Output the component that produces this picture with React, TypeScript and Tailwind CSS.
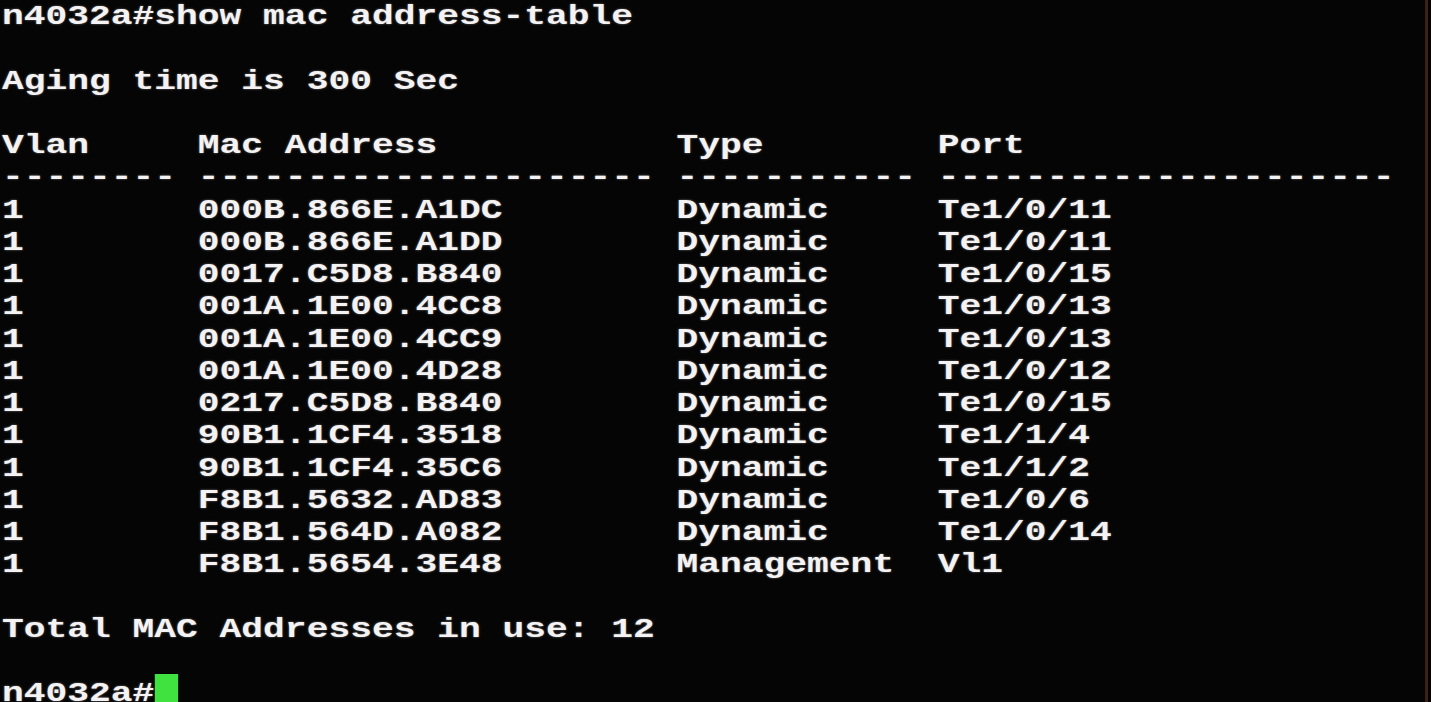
import React from "react";

const lines: string[] = [
  "n4032a#show mac address-table",
  "",
  "Aging time is 300 Sec",
  "",
  "Vlan     Mac Address           Type        Port",
  "-------- --------------------- ----------- ---------------------",
  "1        000B.866E.A1DC        Dynamic     Te1/0/11",
  "1        000B.866E.A1DD        Dynamic     Te1/0/11",
  "1        0017.C5D8.B840        Dynamic     Te1/0/15",
  "1        001A.1E00.4CC8        Dynamic     Te1/0/13",
  "1        001A.1E00.4CC9        Dynamic     Te1/0/13",
  "1        001A.1E00.4D28        Dynamic     Te1/0/12",
  "1        0217.C5D8.B840        Dynamic     Te1/0/15",
  "1        90B1.1CF4.3518        Dynamic     Te1/1/4",
  "1        90B1.1CF4.35C6        Dynamic     Te1/1/2",
  "1        F8B1.5632.AD83        Dynamic     Te1/0/6",
  "1        F8B1.564D.A082        Dynamic     Te1/0/14",
  "1        F8B1.5654.3E48        Management  Vl1",
  "",
  "Total MAC Addresses in use: 12",
  "",
];

export default function App() {
  return (
    <div className="w-full h-[702px] overflow-hidden bg-[#050505] flex">
      <div className="flex-1 min-w-0 overflow-hidden pl-[2px] pt-[1px]">
        <div
          className="origin-top-left scale-x-[1.295] text-[28px] leading-[32.25px] font-bold text-[#f4f2f2] whitespace-pre [text-shadow:0_0_2px_rgba(255,255,255,0.45)]"
          style={{ fontFamily: '"Liberation Mono", "DejaVu Sans Mono", monospace' }}
        >
          {lines.map((l, i) => (
            <div key={i} className="h-[32.25px]">
              {l}
            </div>
          ))}
          <div className="h-[24px] flex items-start">
            <span>n4032a#</span>
            <span className="inline-block w-[18.5px] h-[30px] -mt-[4px] bg-[#3fe23f]" />
          </div>
        </div>
      </div>
      <div className="w-[3px] h-full bg-[#3a2314]" />
      <div className="w-[3px] h-full bg-[#060403]" />
    </div>
  );
}
